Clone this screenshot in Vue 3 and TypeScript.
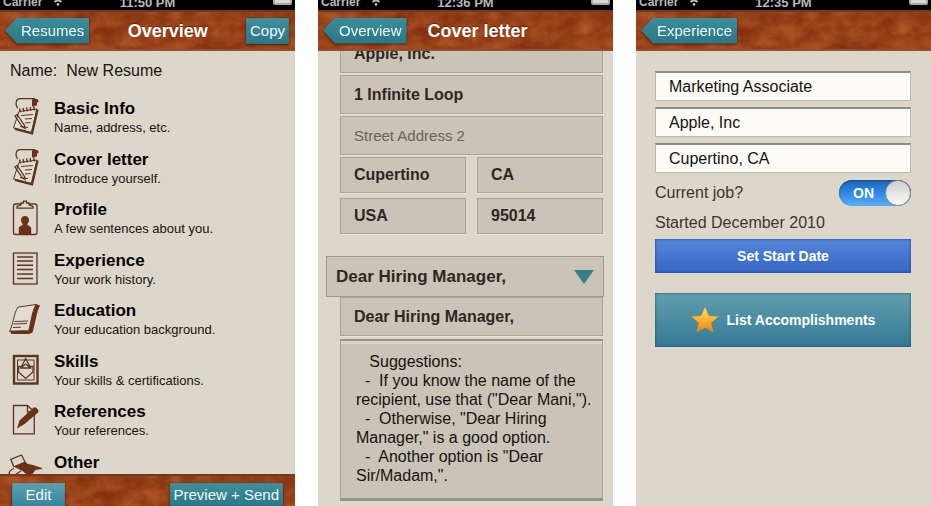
<script setup lang="ts">
import { ref } from 'vue'

type IconName = 'notes' | 'profile' | 'document' | 'book' | 'badge' | 'pencil' | 'chair'

interface Section {
  title: string
  hint: string
  icon: IconName
}

const resumeName = ref('New Resume')

const sections: Section[] = [
  { title: 'Basic Info', hint: 'Name, address, etc.', icon: 'notes' },
  { title: 'Cover letter', hint: 'Introduce yourself.', icon: 'notes' },
  { title: 'Profile', hint: 'A few sentences about you.', icon: 'profile' },
  { title: 'Experience', hint: 'Your work history.', icon: 'document' },
  { title: 'Education', hint: 'Your education background.', icon: 'book' },
  { title: 'Skills', hint: 'Your skills & certifications.', icon: 'badge' },
  { title: 'References', hint: 'Your references.', icon: 'pencil' },
  { title: 'Other', hint: '', icon: 'chair' },
]

const address = ref({
  company: 'Apple, Inc.',
  street: '1 Infinite Loop',
  street2: '',
  city: 'Cupertino',
  state: 'CA',
  country: 'USA',
  zip: '95014',
})

const greeting = ref('Dear Hiring Manager,')
const salutation = ref('Dear Hiring Manager,')

const suggestions = [
  '   Suggestions:',
  '  -  If you know the name of the',
  'recipient, use that ("Dear Mani,").',
  '  -  Otherwise, "Dear Hiring',
  'Manager," is a good option.',
  '  -  Another option is "Dear',
  'Sir/Madam,".',
].join('\n')

const job = ref({ title: 'Marketing Associate', company: 'Apple, Inc', place: 'Cupertino, CA' })
const currentJob = ref(true)

const clocks = ['11:50 PM', '12:36 PM', '12:35 PM']
</script>

<template>
  <svg class="defs" width="0" height="0" aria-hidden="true">
    <defs>
      <filter id="leather" x="0" y="0" width="100%" height="100%" color-interpolation-filters="sRGB">
        <feTurbulence type="fractalNoise" baseFrequency="0.05 0.07" numOctaves="5" seed="8" />
        <feColorMatrix
          values="0.28 0 0 0 0.46  0.22 0 0 0 0.15  0.14 0 0 0 0.03  0 0 0 0 1"
        />
      </filter>
      <linearGradient id="gold" x1="0" y1="0" x2="0" y2="1">
        <stop offset="0" stop-color="#ffe27a" />
        <stop offset="0.5" stop-color="#ffb52e" />
        <stop offset="1" stop-color="#ef7d12" />
      </linearGradient>
    </defs>
  </svg>

  <main class="screens">
    <section class="phone" aria-label="Overview">
      <div class="status">
        <span class="carrier">Carrier</span>
        <svg class="wifi" viewBox="0 0 14 10" aria-hidden="true">
          <path d="M1 3.5a9 9 0 0 1 12 0M3.5 6a5.4 5.4 0 0 1 7 0" />
          <circle cx="7" cy="8.4" r="1.4" />
        </svg>
        <span class="clock">{{ clocks[0] }}</span>
        <span class="battery"></span>
      </div>
      <header class="bar">
        <svg class="leather" aria-hidden="true"><rect width="100%" height="100%" filter="url(#leather)" /></svg>
        <button class="back" type="button"><span>Resumes</span></button>
        <h1 class="bar-title">Overview</h1>
        <button class="tag" type="button">Copy</button>
      </header>
      <div class="overview">
        <div class="name-row">
          <label for="resume-name">Name:</label>
          <input id="resume-name" v-model="resumeName" type="text" />
        </div>
        <ul class="sections">
          <li v-for="section in sections" :key="section.title">
            <a class="section" href="#">
              <svg class="icon" viewBox="0 0 34 38" aria-hidden="true">
                <g v-if="section.icon === 'notes'">
                  <path class="line" d="M9.500 11C7 7.500 7.500 2 12 1.700H27M27 8.500h-3" />
                  <path class="solid" d="M24 3.500c0-1.500 1-2 2.500-2 2.500 0 4 1 4 2.500v1l-1.500.5v3l-5 .7z" />
                  <path class="paper" d="M11 14.500L29 12l-5.500 23.500L5.500 31z" />
                  <path class="heavy" d="M29.500 12.500L24 36.300 7 31.800" />
                  <path class="line" d="M12.500 15.500l-1-4M16 15l-1-4M19.500 14.500l-1-4M23 14l-1-4M26.500 13.500l-1-4" />
                  <path class="thin" d="M13 18.500l12-1M17 22l7-.5M17 26l5.500-.5M12 29.500l8 1" />
                  <path class="line" d="M7 19l2-1.500 7.500 11 .5 3-2.700-1.700z" />
                </g>
                <g v-else-if="section.icon === 'profile'">
                  <rect class="line" x="5.500" y="6" width="23.500" height="30.500" rx="2" />
                  <path class="paper line" d="M9 8.500l4-1.500v-2h2.500V3.200h3V5H21v2l4 1.500v1.700H9z" />
                  <path class="solid" d="M17 18c2.600 0 4 1.700 4 4 0 2-1 3-1.800 4 .2 2 3.800 1.500 4 4.500v6h-12.400v-6c.2-3 3.800-2.500 4-4.500-.8-1-1.800-2-1.800-4 0-2.300 1.400-4 4-4z" />
                </g>
                <g v-else-if="section.icon === 'document'">
                  <rect class="line" x="5.500" y="4" width="23.500" height="31" />
                  <path class="rule" d="M9 8h16M9 12h16M9 16.300h16M9 20.500h16M9 25h16M9 29.500h16" />
                </g>
                <g v-else-if="section.icon === 'book'">
                  <path class="solid" d="M28 5l4 1.500c-4 8-4.500 18-7.500 27L21 35H3.500L1.500 32z" />
                  <path class="paper" d="M10 8c5-.5 11-1.500 18-2.500-4.500 8-4.700 18-7.500 26.500-6-.5-12 0-19 .2C5 27 6 13 10 8z" />
                  <path class="thin" d="M6.500 22.500l13.500-.5M5.500 25l13.500-.5M5 28.500l8-.3" />
                </g>
                <g v-else-if="section.icon === 'badge'">
                  <rect class="heavy" x="6" y="6" width="23.500" height="27.500" />
                  <rect class="thin" x="9.500" y="10" width="16.500" height="20" />
                  <path class="line" d="M17.700 8.500l5 9.500H12.700zM10.500 16.500h4l3.200-2.500 3.200 2.500h4.100v5.500l-7.300 6.500-7.200-6.500z" />
                </g>
                <g v-else-if="section.icon === 'pencil'">
                  <path class="line" d="M19.500 5.500H5.500v28.300h20.800V12zM19.500 5.500v6.500h6.800" />
                  <path class="solid" d="M9 28.500l2.500-8L24.500 8.500c1.500-1.500 3-1.500 4.300-.2l1.500 2c.5 1 0 2-1 3L16.500 24z" />
                </g>
                <g v-else>
                  <path class="line" d="M6 16L2.700 8.300 13.500 4l3.500 7" />
                  <path class="solid" d="M5 15.500c4-1.500 8-3.500 12-5l3 2.500 5 1 9 3 .5 2.500-1-1.500-6 1-4 5h-4l-5-4-6-3z" />
                  <path class="line" d="M6 17.500c-3 1-5 3.500-5 6M13 20l-6 4" />
                </g>
              </svg>
              <span class="section-text">
                <strong>{{ section.title }}</strong>
                <small>{{ section.hint }}</small>
              </span>
            </a>
          </li>
        </ul>
      </div>
      <footer class="toolbar">
        <svg class="leather" aria-hidden="true"><rect width="100%" height="100%" filter="url(#leather)" /></svg>
        <button class="tag tag-light" type="button">Edit</button>
        <button class="tag" type="button">Preview + Send</button>
      </footer>
    </section>

    <section class="phone" aria-label="Cover letter">
      <div class="status">
        <span class="carrier">Carrier</span>
        <svg class="wifi" viewBox="0 0 14 10" aria-hidden="true">
          <path d="M1 3.5a9 9 0 0 1 12 0M3.5 6a5.4 5.4 0 0 1 7 0" />
          <circle cx="7" cy="8.4" r="1.4" />
        </svg>
        <span class="clock">{{ clocks[1] }}</span>
        <span class="battery"></span>
      </div>
      <header class="bar bar-start">
        <svg class="leather" aria-hidden="true"><rect width="100%" height="100%" filter="url(#leather)" /></svg>
        <button class="back" type="button"><span>Overview</span></button>
        <h1 class="bar-title">Cover letter</h1>
      </header>
      <div class="letter">
        <form class="letter-form" @submit.prevent>
          <div class="address">
            <input v-model="address.company" class="field tall" type="text" aria-label="Company" />
            <input v-model="address.street" class="field tall" type="text" aria-label="Street address" />
            <input v-model="address.street2" class="field tall" type="text" placeholder="Street Address 2" aria-label="Street Address 2" />
          </div>
          <div class="address-pairs">
            <input v-model="address.city" class="field" type="text" aria-label="City" />
            <input v-model="address.state" class="field" type="text" aria-label="State" />
            <input v-model="address.country" class="field" type="text" aria-label="Country" />
            <input v-model="address.zip" class="field" type="text" aria-label="Zip code" />
          </div>
          <div class="greeting">
            <select v-model="greeting" aria-label="Greeting">
              <option>Dear Hiring Manager,</option>
            </select>
            <svg class="caret" viewBox="0 0 20 14" aria-hidden="true"><path d="M0 0h20L10 14z" /></svg>
          </div>
          <div class="salutation">
            <input v-model="salutation" class="field tall" type="text" aria-label="Salutation" />
            <p class="suggestions">{{ suggestions }}</p>
          </div>
        </form>
      </div>
    </section>

    <section class="phone" aria-label="Experience">
      <div class="status">
        <span class="carrier">Carrier</span>
        <svg class="wifi" viewBox="0 0 14 10" aria-hidden="true">
          <path d="M1 3.5a9 9 0 0 1 12 0M3.5 6a5.4 5.4 0 0 1 7 0" />
          <circle cx="7" cy="8.4" r="1.4" />
        </svg>
        <span class="clock">{{ clocks[2] }}</span>
        <span class="battery"></span>
      </div>
      <header class="bar bar-start">
        <svg class="leather" aria-hidden="true"><rect width="100%" height="100%" filter="url(#leather)" /></svg>
        <button class="back" type="button"><span>Experience</span></button>
      </header>
      <form class="job" @submit.prevent>
        <div class="job-fields">
          <input v-model="job.title" type="text" aria-label="Job title" />
          <input v-model="job.company" type="text" aria-label="Employer" />
          <input v-model="job.place" type="text" aria-label="Location" />
        </div>
        <div class="job-row">
          <label for="current-job">Current job?</label>
          <span class="switch">
            <input id="current-job" v-model="currentJob" type="checkbox" role="switch" />
            <span class="switch-track" aria-hidden="true">{{ currentJob ? 'ON' : 'OFF' }}</span>
          </span>
        </div>
        <p class="started">Started December 2010</p>
        <button class="action action-blue" type="button">Set Start Date</button>
        <button class="action action-teal" type="button">
          <svg class="star" viewBox="0 0 28 28" aria-hidden="true">
            <path d="M14 1l3.900 8.700 9.400.9-7.100 6.300 2.100 9.300L14 21.400l-8.300 4.800 2.100-9.300L.7 10.600l9.400-.9z" />
          </svg>
          List Accomplishments
        </button>
      </form>
    </section>
  </main>
</template>

<style>
body {
  margin: 0;
  background: #fff;
}
</style>

<style scoped>
.defs {
  position: absolute;
}

.screens {
  display: grid;
  grid-template-columns: repeat(3, minmax(0, 1fr));
  gap: 23px;
  height: 100vh;
  overflow: hidden;
  font-family: "Liberation Sans", Arial, Helvetica, sans-serif;
  font-size: 16px;
  color: #16130f;
}

.screens *,
.screens {
  box-sizing: border-box;
}

button,
input,
select {
  margin: 0;
  border: 0;
  border-radius: 0;
  font: inherit;
  color: inherit;
  outline: none;
  appearance: none;
}

button {
  cursor: pointer;
}

.phone {
  display: flex;
  flex-direction: column;
  min-height: 0;
  overflow: hidden;
  background: #dcd7ca;
}

/* Status bar */
.status {
  display: grid;
  grid-template-columns: 40px 1fr auto 1fr 40px;
  align-content: end;
  align-items: end;
  flex: none;
  height: 10px;
  padding: 0 3px;
  overflow: hidden;
  background: #000;
  color: #b9b9b9;
  font-size: 12px;
  font-weight: bold;
  line-height: 15px;
}

.wifi {
  width: 14px;
  height: 10px;
  margin: 0 0 4px 8px;
  fill: #b9b9b9;
}

.wifi path {
  fill: none;
  stroke: #b9b9b9;
  stroke-width: 2;
}

.clock {
  grid-column: 3;
  font-size: 13px;
}

.battery {
  grid-column: 5;
  justify-self: end;
  width: 19px;
  height: 10px;
  margin-bottom: 5px;
  border: 2px solid #a8a8a8;
  border-radius: 2px;
  background: #d8d8d8;
}

/* Leather bars */
.bar,
.toolbar {
  position: relative;
  z-index: 0;
  display: flex;
  flex: none;
  overflow: hidden;
  background: #97401c;
}

.bar {
  align-items: center;
  height: 41px;
  padding: 0 6px 0 5px;
  border-top: 2px solid #6d3a22;
  border-bottom: 2px solid #8f5034;
}

.leather {
  position: absolute;
  inset: 0;
  z-index: -1;
  width: 100%;
  height: 100%;
}

.bar-title {
  flex: 1;
  margin: 0;
  font-size: 18px;
  line-height: 24px;
  text-align: center;
  color: #fff;
  text-shadow: 0 -1px 1px rgba(60, 20, 0, 0.6);
}

.bar-start {
  gap: 21px;
}

.bar-start .bar-title {
  text-align: left;
}

.back {
  padding: 0;
  background: none;
  filter: drop-shadow(0 1px 1px rgba(50, 15, 0, 0.7));
}

.back span {
  display: block;
  padding: 0 5px 0 16px;
  background: linear-gradient(#3c8c99, #2a7787);
  clip-path: polygon(0 50%, 12px 0, 100% 0, 100% 100%, 12px 100%);
  font-size: 15px;
  line-height: 26px;
  color: #f2f8f8;
}

.tag {
  height: 26px;
  padding: 0 4px;
  background: linear-gradient(#3f8f9d, #2a7787);
  box-shadow: 0 1px 2px rgba(50, 15, 0, 0.8), inset 0 0 1px #1d5965;
  font-size: 15px;
  line-height: 24px;
  color: #f2f8f8;
}

/* Overview */
.overview {
  display: flex;
  flex: 1;
  flex-direction: column;
  min-height: 0;
}

.name-row {
  display: flex;
  gap: 9px;
  height: 40px;
  padding: 0 10px;
  line-height: 40px;
}

.name-row input {
  flex: 1;
  min-width: 0;
  padding: 0;
  background: transparent;
}

.sections {
  display: grid;
  flex: 1;
  grid-template-rows: repeat(7, minmax(0, 1fr)) 29px;
  min-height: 0;
  margin: 0;
  padding: 0;
  overflow: hidden;
  list-style: none;
}

.section {
  display: flex;
  gap: 12px;
  padding: 6px 8px 0;
  color: inherit;
  text-decoration: none;
}

.icon {
  flex: none;
  width: 34px;
  height: 38px;
  fill: none;
  stroke: #5c3424;
  stroke-width: 1;
}

.icon .paper {
  fill: #e2ddd2;
}

.icon .line {
  stroke-width: 1.3;
}

.icon .thin {
  stroke-width: 1;
}

.icon .rule {
  stroke-width: 1.6;
}

.icon .heavy {
  stroke-width: 2.4;
}

.icon .solid {
  fill: #6b3018;
  stroke-width: 0;
}

.section-text {
  padding-top: 2px;
}

.section-text strong,
.section-text small {
  display: block;
}

.section-text strong {
  font-size: 17px;
  line-height: 20px;
  color: #050403;
}

.section-text small {
  font-size: 13px;
  line-height: 18px;
}

.toolbar {
  align-items: flex-start;
  justify-content: space-between;
  height: 32px;
  padding: 7px 12px 0;
  border-top: 2px solid #6d3a22;
}

.toolbar .tag {
  height: 24px;
}

.tag-light {
  width: 53px;
  background: linear-gradient(#5aa0b4, #38839a);
}

/* Cover letter */
.letter {
  flex: 1;
  min-height: 0;
  overflow: hidden;
}

.letter-form {
  margin-top: -17px;
}

.address {
  display: grid;
  gap: 2px;
  padding: 0 10px 0 22px;
}

.field {
  width: 100%;
  min-width: 0;
  height: 36px;
  padding: 0 13px;
  border: 1px solid #aaa598;
  background: #c9c4b7;
  box-shadow: 0 1px 0 #e6e1d6;
  font-weight: bold;
  color: #302622;
}

.tall {
  height: 39px;
}

.field::placeholder {
  font-size: 15px;
  font-weight: normal;
  color: #6a625b;
  opacity: 1;
}

.address-pairs {
  display: grid;
  grid-template-columns: 1fr 1fr;
  gap: 5px 11px;
  padding: 2px 10px 0 22px;
}

.greeting {
  position: relative;
  margin: 22px 9px 0 8px;
}

.greeting select {
  display: block;
  width: 100%;
  height: 41px;
  padding: 0 40px 0 9px;
  border: 1px solid #a09b8f;
  background: #c9c4b7;
  font-size: 17px;
  font-weight: bold;
  color: #302622;
}

.caret {
  position: absolute;
  top: 14px;
  right: 10px;
  width: 20px;
  height: 14px;
  fill: #38808f;
  pointer-events: none;
}

.salutation {
  padding: 0 10px 0 22px;
}

.suggestions {
  margin: 3px 0 0;
  padding: 11px 0 13px 15px;
  border: 1px solid #aaa598;
  border-top: 2px solid #97938a;
  border-bottom: 3px solid #97938a;
  background: #c9c4b7;
  box-shadow: inset 0 3px 0 #d9d4c7;
  line-height: 19px;
  white-space: pre;
}

/* Experience */
.job {
  padding: 20px 20px 0 19px;
  color: #3d3530;
}

.job-fields {
  display: grid;
  gap: 6px;
}

.job-fields input {
  width: 100%;
  height: 30px;
  padding: 0 13px;
  border: 1px solid #bdb9ae;
  border-top: 2px solid #8e8b84;
  background: #fcfbf5;
  color: #16130f;
}

.job-row {
  display: flex;
  align-items: center;
  justify-content: space-between;
  height: 40px;
}

.switch {
  position: relative;
  width: 72px;
  height: 26px;
}

.switch input {
  position: absolute;
  inset: 0;
  z-index: 1;
  width: 100%;
  height: 100%;
  opacity: 0;
}

.switch-track {
  display: block;
  height: 100%;
  padding-left: 14px;
  border-radius: 13px;
  background: linear-gradient(#1c63bd, #2f88e6 50%, #5cb0f8);
  box-shadow: inset 0 1px 2px #174a88;
  font-size: 14px;
  font-weight: bold;
  line-height: 26px;
  color: #fff;
}

.switch-track::after {
  position: absolute;
  top: 0;
  right: 0;
  width: 26px;
  height: 26px;
  border: 1px solid #8d8d8d;
  border-radius: 50%;
  background: linear-gradient(#cfcfcf, #fafafa);
  content: "";
  box-sizing: border-box;
}

.started {
  margin: 0;
  line-height: 20px;
}

.action {
  display: flex;
  align-items: center;
  justify-content: center;
  gap: 8px;
  width: 100%;
  height: 34px;
  margin-top: 6px;
  padding: 0;
  font-size: 14px;
  font-weight: bold;
  color: #fff;
}

.action-blue {
  background: linear-gradient(#5587dc, #3466c3);
  box-shadow: inset 0 0 3px #1d3f86;
}

.action-teal {
  height: 54px;
  margin-top: 20px;
  background: linear-gradient(#629eb0, #337a94);
  box-shadow: inset 0 0 3px #1c5064;
}

.star {
  width: 28px;
  height: 28px;
  fill: url(#gold);
  stroke: #d9861c;
  stroke-width: 0.5;
}
</style>
